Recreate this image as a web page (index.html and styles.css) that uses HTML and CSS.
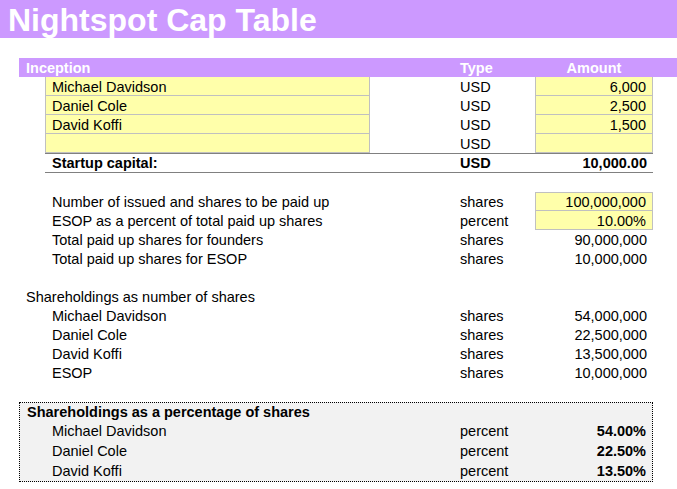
FILE: index.html
```html
<!DOCTYPE html>
<html>
<head>
<meta charset="utf-8">
<link rel="stylesheet" href="styles.css">
</head>
<body>
<div class="title">Nightspot Cap Table</div>
<div class="sheet">
  <div class="row head">
    <div class="c-wide hlabel">Inception</div>
    <div class="c-type">Type</div>
    <div class="c-amt center">Amount</div>
  </div>
  <div class="row">
    <div class="c-name in">Michael Davidson</div>
    <div class="c-type">USD</div>
    <div class="c-amt in num">6,000</div>
  </div>
  <div class="row">
    <div class="c-name in">Daniel Cole</div>
    <div class="c-type">USD</div>
    <div class="c-amt in num">2,500</div>
  </div>
  <div class="row">
    <div class="c-name in">David Koffi</div>
    <div class="c-type">USD</div>
    <div class="c-amt in num">1,500</div>
  </div>
  <div class="row">
    <div class="c-name in"></div>
    <div class="c-type">USD</div>
    <div class="c-amt in num"></div>
  </div>
  <div class="row total">
    <div class="c-totalline">
      <div class="t-label">Startup capital:</div>
      <div class="t-type">USD</div>
      <div class="t-amt">10,000.00</div>
    </div>
  </div>
  <div class="row"></div>
  <div class="row">
    <div class="c-name lbl">Number of issued and shares to be paid up</div>
    <div class="c-type">shares</div>
    <div class="c-amt in first num">100,000,000</div>
  </div>
  <div class="row">
    <div class="c-name lbl">ESOP as a percent of total paid up shares</div>
    <div class="c-type">percent</div>
    <div class="c-amt in num">10.00%</div>
  </div>
  <div class="row">
    <div class="c-name lbl">Total paid up shares for founders</div>
    <div class="c-type">shares</div>
    <div class="c-amt plain">90,000,000</div>
  </div>
  <div class="row">
    <div class="c-name lbl">Total paid up shares for ESOP</div>
    <div class="c-type">shares</div>
    <div class="c-amt plain">10,000,000</div>
  </div>
  <div class="row"></div>
  <div class="row">
    <div class="c-wide section">Shareholdings as number of shares</div>
  </div>
  <div class="row">
    <div class="c-name lbl">Michael Davidson</div>
    <div class="c-type">shares</div>
    <div class="c-amt plain">54,000,000</div>
  </div>
  <div class="row">
    <div class="c-name lbl">Daniel Cole</div>
    <div class="c-type">shares</div>
    <div class="c-amt plain">22,500,000</div>
  </div>
  <div class="row">
    <div class="c-name lbl">David Koffi</div>
    <div class="c-type">shares</div>
    <div class="c-amt plain">13,500,000</div>
  </div>
  <div class="row">
    <div class="c-name lbl">ESOP</div>
    <div class="c-type">shares</div>
    <div class="c-amt plain">10,000,000</div>
  </div>
  <div class="row"></div>
  <div class="box">
    <div class="box-head">Shareholdings as a percentage of shares</div>
    <div class="box-row">
      <div class="b-name">Michael Davidson</div>
      <div class="b-type">percent</div>
      <div class="b-amt">54.00%</div>
    </div>
    <div class="box-row">
      <div class="b-name">Daniel Cole</div>
      <div class="b-type">percent</div>
      <div class="b-amt">22.50%</div>
    </div>
    <div class="box-row">
      <div class="b-name">David Koffi</div>
      <div class="b-type">percent</div>
      <div class="b-amt">13.50%</div>
    </div>
  </div>
</div>
</body>
</html>
```

FILE: styles.css
```css
html, body {
  margin: 0;
  padding: 0;
  background: #ffffff;
}
body {
  font-family: "Liberation Sans", Arial, sans-serif;
  font-size: 14.5px;
  color: #000000;
}
.title {
  box-sizing: border-box;
  height: 38px;
  padding: 2px 0 0 8px;
  line-height: 36px;
  background: #cc99ff;
  color: #ffffff;
  font-weight: bold;
  font-size: 32px;
  white-space: nowrap;
}
.sheet {
  margin: 20px 0 0 19px;
}
.row {
  display: grid;
  grid-template-columns: 26px 325px 85px 80px 118px 1fr;
  grid-template-rows: 19px;
  height: 19px;
  line-height: 21px;
  white-space: nowrap;
}
.head {
  background: #cc99ff;
  color: #ffffff;
  font-weight: bold;
  line-height: 20px;
}
.c-wide {
  grid-column: 1 / 4;
  padding-left: 7px;
}
.hlabel {
  padding-left: 7px;
}
.section {
  padding-left: 7px;
}
.c-name {
  grid-column: 2;
}
.c-type {
  grid-column: 4;
  padding-left: 5px;
}
.c-amt {
  grid-column: 5;
}
.center {
  text-align: center;
}
.in {
  box-sizing: border-box;
  background: #ffffaa;
  border-left: 1px solid #c0c0c0;
  border-right: 1px solid #c0c0c0;
  border-bottom: 1px solid #c0c0c0;
  padding-left: 6px;
  line-height: 21px;
  overflow: visible;
}
.in.first {
  border-top: 1px solid #c0c0c0;
  line-height: 19px;
}
.num {
  text-align: right;
  padding-right: 6px;
}
.plain {
  text-align: right;
  padding-right: 6px;
}
.lbl {
  padding-left: 7px;
}
.total {
  grid-template-rows: 20px;
  height: 20px;
}
.c-totalline {
  grid-column: 2 / 6;
  display: grid;
  grid-template-columns: 410px 80px 118px;
  box-sizing: border-box;
  border-top: 1px solid #808080;
  border-bottom: 1px solid #808080;
  font-weight: bold;
  line-height: 19px;
}
.t-label {
  padding-left: 7px;
}
.t-type {
  padding-left: 5px;
}
.t-amt {
  text-align: right;
  padding-right: 6px;
}
.box {
  box-sizing: border-box;
  width: 634px;
  margin-top: 1px;
  border: 1px dotted #000000;
  background: #f2f2f2;
  white-space: nowrap;
}
.box-head {
  height: 18px;
  line-height: 18px;
  padding-left: 7px;
  font-weight: bold;
}
.box-row {
  display: grid;
  grid-template-columns: 25px 325px 85px 80px 117px;
  height: 20px;
  line-height: 20px;
}
.b-name {
  grid-column: 2;
  padding-left: 7px;
}
.b-type {
  grid-column: 4;
  padding-left: 5px;
}
.b-amt {
  grid-column: 5;
  text-align: right;
  padding-right: 6px;
  font-weight: bold;
}
```
